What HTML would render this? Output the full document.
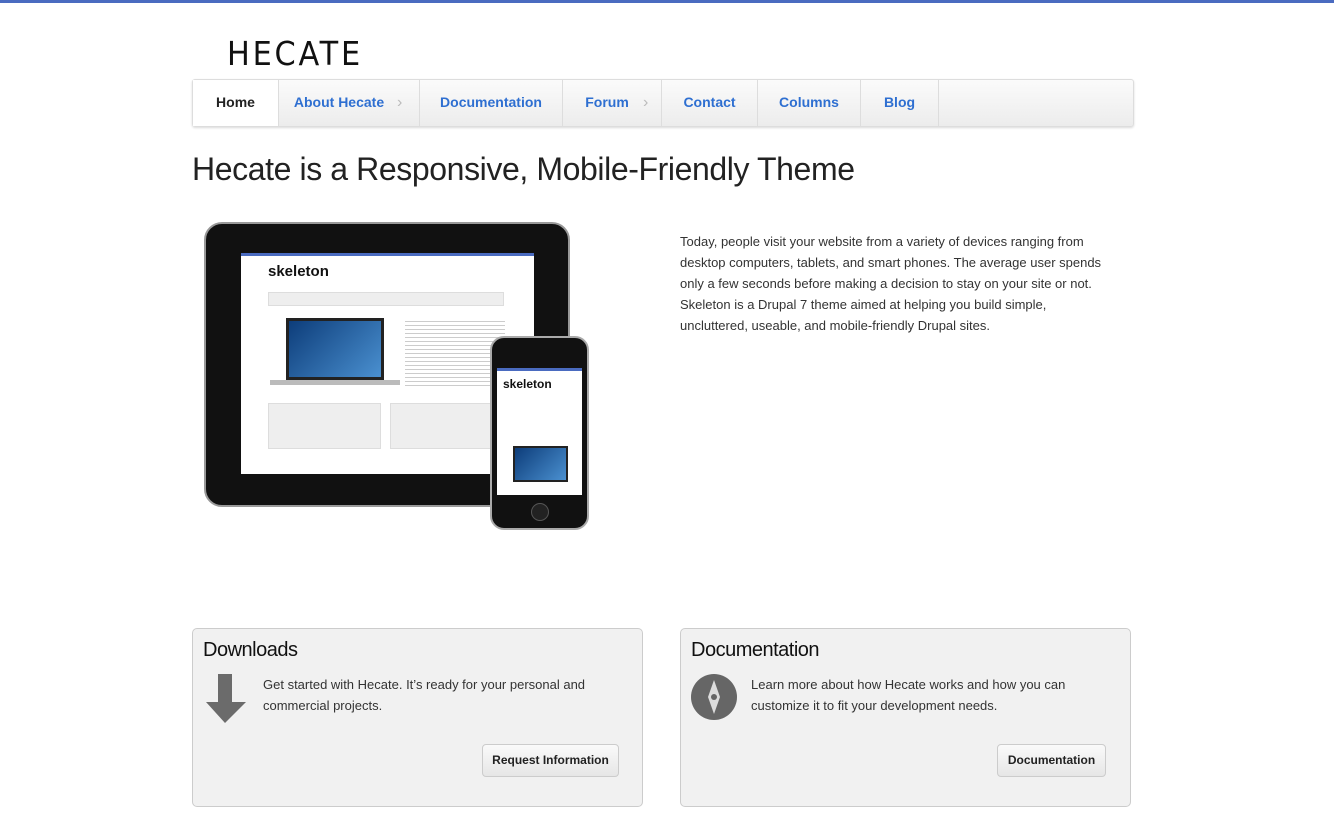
<!DOCTYPE html>
<html><head><meta charset="utf-8"><style>
*{margin:0;padding:0;box-sizing:border-box}
body{width:1334px;height:820px;background:#fff;font-family:"Liberation Sans",sans-serif;color:#333;position:relative;overflow:hidden}
.abs{position:absolute}
.logo{left:227px;top:34px;font-family:"DejaVu Sans",sans-serif;font-size:33px;letter-spacing:3px;color:#111;transform:scaleX(0.92);transform-origin:left}
.nav{left:192px;top:79px;width:942px;height:48px;border:1px solid #ddd;border-radius:3px;background:linear-gradient(#fbfbfb,#ececec);box-shadow:0 1px 2px rgba(0,0,0,.15)}
.nav a{position:absolute;top:0;height:46px;line-height:45px;text-align:center;font-size:14px;font-weight:bold;color:#2e6fd1;text-decoration:none;border-right:1px solid #ddd}
.nav a.h{background:#fff;color:#222}
.chev{position:absolute;color:#bbb;font-size:16px;top:0;line-height:45px}
h1{left:192px;top:151px;font-size:32px;font-weight:normal;color:#222;letter-spacing:-0.4px}
.p{left:680px;top:231px;width:432px;font-size:13px;line-height:21px;color:#333}
.box{top:628px;width:451px;height:179px;background:#f1f1f1;border:1px solid #ccc;border-radius:5px}
.box h2{position:absolute;left:10px;top:10px;font-size:20px;font-weight:normal;color:#111;letter-spacing:-0.5px}
.box p{position:absolute;left:70px;top:45px;width:370px;font-size:13px;line-height:21px}
.btn{position:absolute;top:115px;height:33px;border:1px solid #ccc;border-radius:4px;background:linear-gradient(#fafafa,#e6e6e6);font-size:12px;font-weight:bold;line-height:31px;text-align:center;color:#222}
</style></head><body>
<div class="abs" style="left:0;top:0;width:1334px;height:3px;background:#4a6bc0"></div>
<div class="abs logo">HECATE</div>
<div class="abs nav">
<a class="h" style="left:0;width:86px">Home</a>
<a style="left:86px;width:141px;padding-right:20px">About Hecate</a><span class="chev" style="left:204px">›</span>
<a style="left:227px;width:143px">Documentation</a>
<a style="left:370px;width:99px;padding-right:10px">Forum</a><span class="chev" style="left:450px">›</span>
<a style="left:469px;width:96px">Contact</a>
<a style="left:565px;width:103px">Columns</a>
<a style="left:668px;width:78px">Blog</a>
</div>
<h1 class="abs">Hecate is a Responsive, Mobile-Friendly Theme</h1>
<div class="abs" style="left:204px;top:222px;width:366px;height:285px;background:#111;border-radius:18px;border:2px solid #999"></div>
<div class="abs" style="left:241px;top:253px;width:293px;height:221px;background:#fff;border-top:3px solid #4a6bc0"></div>
<div class="abs" style="left:268px;top:263px;font-size:15px;font-weight:bold;color:#111">skeleton</div>
<div class="abs" style="left:268px;top:292px;width:236px;height:14px;background:#eee;border:1px solid #ddd"></div>
<div class="abs" style="left:286px;top:318px;width:98px;height:62px;background:linear-gradient(135deg,#0d3d7a,#4a90d0);border:3px solid #222"></div>
<div class="abs" style="left:270px;top:380px;width:130px;height:5px;background:#bbb"></div>
<div class="abs" style="left:268px;top:403px;width:113px;height:46px;background:#eee;border:1px solid #ddd"></div>
<div class="abs" style="left:390px;top:403px;width:113px;height:46px;background:#eee;border:1px solid #ddd"></div>
<div class="abs" style="left:405px;top:318px;width:100px;height:70px;background:repeating-linear-gradient(#fff 0 3px,#ccc 3px 4px)"></div>
<div class="abs" style="left:490px;top:336px;width:99px;height:194px;background:#111;border-radius:14px;border:2px solid #aaa"></div>
<div class="abs" style="left:497px;top:368px;width:85px;height:127px;background:#fff;border-top:3px solid #4a6bc0"></div>
<div class="abs" style="left:503px;top:377px;font-size:12px;font-weight:bold;color:#111">skeleton</div>
<div class="abs" style="left:513px;top:446px;width:55px;height:36px;background:linear-gradient(135deg,#0d3d7a,#4a90d0);border:2px solid #222"></div>
<div class="abs" style="left:531px;top:503px;width:18px;height:18px;border-radius:50%;background:#222;border:1px solid #555"></div>
<div class="abs p">Today, people visit your website from a variety of devices ranging from desktop computers, tablets, and smart phones. The average user spends only a few seconds before making a decision to stay on your site or not. Skeleton is a Drupal 7 theme aimed at helping you build simple, uncluttered, useable, and mobile-friendly Drupal sites.</div>
<div class="abs box" style="left:192px"><h2>Downloads</h2>
<svg style="position:absolute;left:13px;top:45px" width="42" height="50"><path d="M12 0h14v28h14L19 49 0 28h12z" fill="#6b6b6b"/></svg>
<p>Get started with Hecate. It’s ready for your personal and commercial projects.</p>
<div class="btn" style="left:289px;width:137px">Request Information</div></div>
<div class="abs box" style="left:680px"><h2>Documentation</h2>
<svg style="position:absolute;left:10px;top:45px" width="46" height="46"><circle cx="23" cy="23" r="23" fill="#666"/><path d="M23 6l6 17-6 17-6-17z" fill="#ddd"/><circle cx="23" cy="23" r="3" fill="#666"/></svg>
<p>Learn more about how Hecate works and how you can customize it to fit your development needs.</p>
<div class="btn" style="left:316px;width:109px">Documentation</div></div>
</body></html>
